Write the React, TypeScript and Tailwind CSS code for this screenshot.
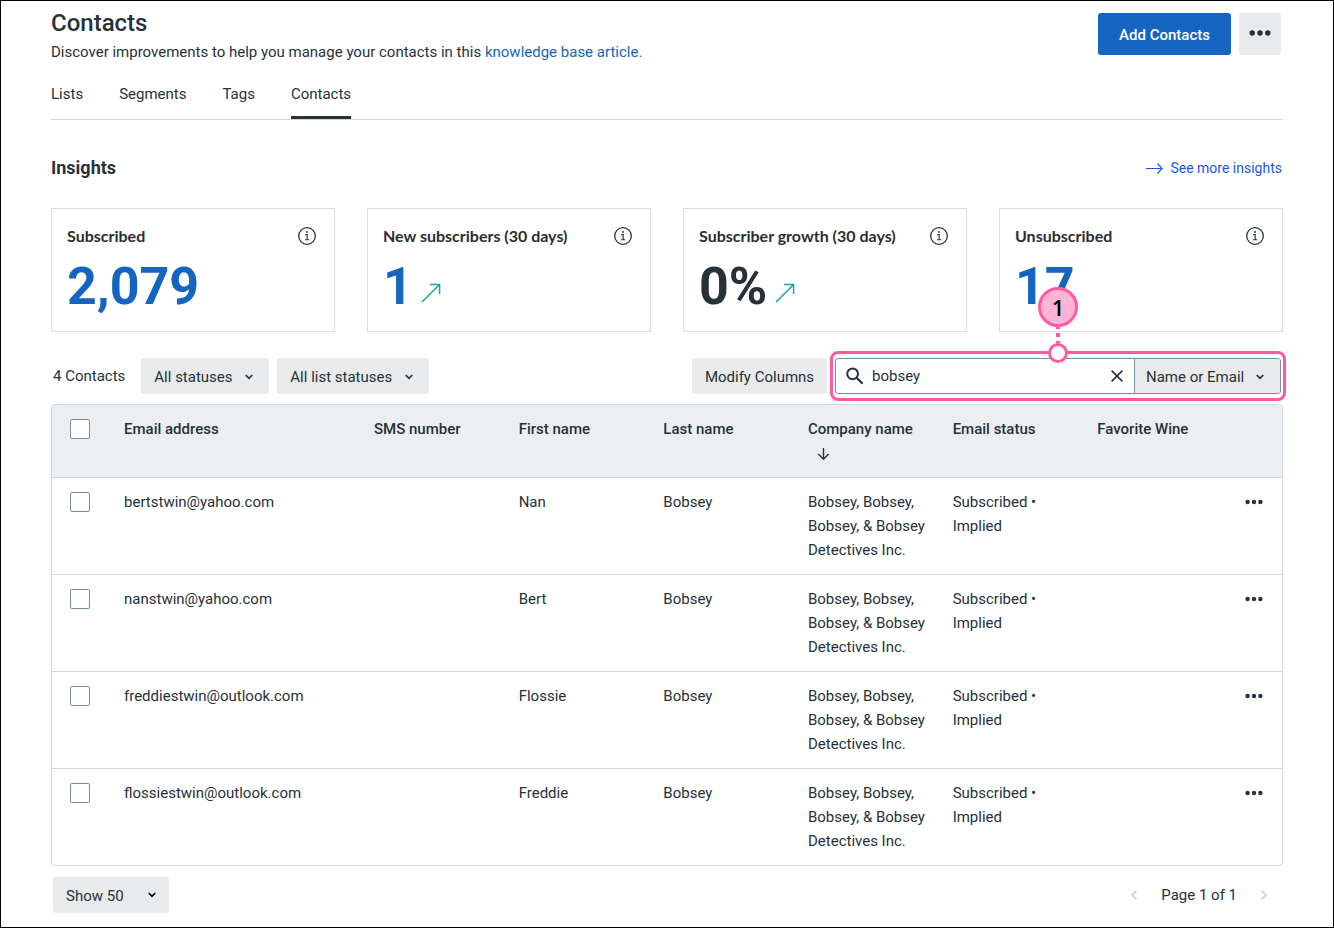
import { useState } from 'react';

type Contact = { email: string; first: string; last: string };
type Insight = { title: string; value: string; tone: string; trend?: boolean };

const tabs = ['Lists', 'Segments', 'Tags', 'Contacts'];

const insights: Insight[] = [
  { title: 'Subscribed', value: '2,079', tone: 'text-[#1565c0]' },
  { title: 'New subscribers (30 days)', value: '1', tone: 'text-[#1565c0]', trend: true },
  { title: 'Subscriber growth (30 days)', value: '0%', tone: 'text-[#263238]', trend: true },
  { title: 'Unsubscribed', value: '17', tone: 'text-[#1565c0]' },
];

const contacts: Contact[] = [
  { email: 'bertstwin@yahoo.com', first: 'Nan', last: 'Bobsey' },
  { email: 'nanstwin@yahoo.com', first: 'Bert', last: 'Bobsey' },
  { email: 'freddiestwin@outlook.com', first: 'Flossie', last: 'Bobsey' },
  { email: 'flossiestwin@outlook.com', first: 'Freddie', last: 'Bobsey' },
];

function Dots({ className }: { className: string }) {
  return (
    <svg viewBox="0 0 22 6" className={className} fill="currentColor" aria-hidden="true">
      <circle cx="3.2" cy="3" r="2.7" />
      <circle cx="11" cy="3" r="2.7" />
      <circle cx="18.8" cy="3" r="2.7" />
    </svg>
  );
}

function InfoIcon() {
  return (
    <svg viewBox="0 0 18 18" className="size-[18px]" fill="none" stroke="#263238" aria-hidden="true">
      <circle cx="9" cy="9" r="8.3" strokeWidth="1.3" />
      <path d="M7.2 7.6h2v5M7 12.8h4.2" strokeWidth="1.1" />
      <circle cx="9" cy="5" r="0.9" fill="#263238" stroke="none" />
    </svg>
  );
}

function TrendIcon() {
  return (
    <svg viewBox="0 0 20 20" className="size-5" fill="none" stroke="#12a89d" strokeWidth="1.5" aria-hidden="true">
      <path d="M1 19 18.4 1.8M9 1.6h9.6V11" />
    </svg>
  );
}

function Chevron({ className }: { className: string }) {
  return (
    <svg viewBox="0 0 8 6" className={className} fill="none" stroke="currentColor" strokeWidth="1.7" aria-hidden="true">
      <path d="M.7 1 4 4.3 7.3 1" />
    </svg>
  );
}

function PickList({ label, value, width, chevron }: { label: string; value: string; width: string; chevron: string }) {
  return (
    <div className={`relative ${width}`}>
      <select
        aria-label={label}
        className="h-9 w-full cursor-pointer appearance-none rounded-[3px] bg-[#e8eaeb] pt-0.5 pr-8 pl-[13px]"
      >
        <option>{value}</option>
      </select>
      <Chevron className={`pointer-events-none absolute h-1.5 w-2 ${chevron}`} />
    </div>
  );
}

function Checkbox({ label }: { label: string }) {
  return (
    <input
      type="checkbox"
      aria-label={label}
      className="mt-0.5 ml-1.5 block size-5 appearance-none rounded-[2px] border border-[#78909c] bg-white checked:bg-[#1565c0]"
    />
  );
}

function SearchBox() {
  const [query, setQuery] = useState('bobsey');
  return (
    <div className="relative w-[446px]">
      <div className="flex h-9 overflow-hidden rounded-[3px] border border-[#78909c]">
        <label className="flex min-w-0 flex-1 items-center gap-2 pl-2.5">
          <svg viewBox="0 0 18 18" className="size-[18px] shrink-0" fill="none" stroke="#263238" aria-hidden="true">
            <circle cx="6.6" cy="6.8" r="5.4" strokeWidth="2" />
            <path d="m10.6 10.8 6 6" strokeWidth="2.3" />
          </svg>
          <input
            type="text"
            aria-label="Search contacts"
            value={query}
            onChange={(e) => setQuery(e.target.value)}
            className="min-w-0 flex-1 bg-transparent leading-6 outline-none"
          />
        </label>
        <button type="button" aria-label="Clear search" onClick={() => setQuery('')} className="px-[11px]">
          <svg viewBox="0 0 12 12" className="size-3" fill="none" stroke="#263238" strokeWidth="1.6" aria-hidden="true">
            <path d="m.6.6 10.8 10.8M11.4.6.6 11.4" />
          </svg>
        </button>
        <div className="relative w-[146px] border-l border-[#78909c]">
          <select aria-label="Search field" className="h-full w-full appearance-none bg-[#e8eaeb] pt-0.5 pr-7 pl-[11px]">
            <option>Name or Email</option>
          </select>
          <Chevron className="pointer-events-none absolute top-[15px] right-4 h-1.5 w-2" />
        </div>
      </div>
      <div className="pointer-events-none absolute -inset-x-[5px] -inset-y-[7px] rounded-lg border-3 border-[#ff5ba3]" />
      <div className="pointer-events-none absolute -top-[71px] left-1/2 flex w-10 -translate-x-1/2 flex-col items-center">
        <span className="flex size-10 items-center justify-center rounded-full border-3 border-[#ff5ba3] bg-[#ffb3d5] font-['Open_Sans'] text-[22px] font-semibold text-black">
          1
        </span>
        <svg viewBox="0 0 4 16" className="h-4 w-1" stroke="#ff5ba3" strokeWidth="4" aria-hidden="true">
          <path d="M2 0v2M2 6v4M2 14v2" />
        </svg>
        <span className="size-5 rounded-full border-3 border-[#ff5ba3] bg-white" />
      </div>
    </div>
  );
}

export default function App() {
  return (
    <main className="min-h-screen border border-black bg-white px-[50px] pt-3 pb-3 font-[Roboto,sans-serif] text-[15px] text-[#263238]">
      <header className="flex items-start justify-between">
        <div>
          <h1 className="text-2xl leading-5 font-medium">Contacts</h1>
          <p className="mt-2 leading-[22px]">
            Discover improvements to help you manage your contacts in this{' '}
            <a href="#article" className="text-[#1565c0]">
              knowledge base article.
            </a>
          </p>
        </div>
        <div className="flex gap-2 pr-0.5">
          <button type="button" className="h-[42px] w-[133px] rounded-[3px] bg-[#1565c0] pt-0.5 font-medium text-white">
            Add Contacts
          </button>
          <button
            type="button"
            aria-label="More actions"
            className="flex size-[42px] items-center justify-center rounded-[3px] bg-[#e8eaeb] pb-0.5"
          >
            <Dots className="h-1.5 w-[22px]" />
          </button>
        </div>
      </header>

      <nav className="mt-[19px] flex gap-9 border-b border-[#cfd8dc]">
        {tabs.map((tab) => (
          <a
            key={tab}
            href={`#${tab.toLowerCase()}`}
            className={`border-b-3 pb-2.5 leading-6 ${tab === 'Contacts' ? 'border-[#263238]' : 'border-transparent'}`}
          >
            {tab}
          </a>
        ))}
      </nav>

      <section className="mt-9">
        <div className="flex items-center justify-between">
          <h2 className="text-lg leading-6 font-bold">Insights</h2>
          <a href="#insights" className="flex items-center gap-[7px] pr-px text-sm text-[#1d56e8]">
            <svg viewBox="0 0 17 12" className="h-3 w-[17px]" fill="none" stroke="currentColor" strokeWidth="1.2" aria-hidden="true">
              <path d="M0 6.5h16M11.5 1.5l4.7 5-4.7 5" />
            </svg>
            See more insights
          </a>
        </div>
        <div className="mt-7 grid grid-cols-4 gap-8">
          {insights.map((item) => (
            <article key={item.title} className="border border-[#dcdddf] pt-[15px] pr-[18px] pb-[15px] pl-[15px]">
              <div className="flex items-center justify-between">
                <h3 className="font-[Lato,sans-serif] text-base leading-6 font-bold text-[#2b2e30]">{item.title}</h3>
                <button type="button" aria-label={`About ${item.title}`}>
                  <InfoIcon />
                </button>
              </div>
              <p className={`mt-2.5 flex items-center gap-2 text-[52px] leading-[58px] font-bold ${item.tone}`}>
                {item.value}
                {item.trend && (
                  <span className="pt-3">
                    <TrendIcon />
                  </span>
                )}
              </p>
            </article>
          ))}
        </div>
      </section>

      <div className="mt-[26px] flex items-center gap-2 px-0.5">
        <span className="mr-2 leading-6">4 Contacts</span>
        <PickList label="Status" value="All statuses" width="w-32" chevron="top-4 right-4" />
        <PickList label="List status" value="All list statuses" width="w-[152px]" chevron="top-4 right-4" />
        <button type="button" className="ml-auto h-9 w-[135px] rounded-[3px] bg-[#e8eaeb] pt-0.5">
          Modify Columns
        </button>
        <SearchBox />
      </div>

      <div className="mt-2.5 overflow-hidden rounded border border-[#cfd8dc]">
        <table className="w-full table-fixed border-collapse text-left leading-6">
          <thead className="bg-[#eceff1]">
            <tr className="border-b border-[#cfd8dc] align-top [&>th]:p-3 [&>th]:font-medium">
              <th className="w-[60px]">
                <Checkbox label="Select all contacts" />
              </th>
              <th className="w-[250px]">Email address</th>
              <th>SMS number</th>
              <th>First name</th>
              <th>Last name</th>
              <th aria-sort="descending">
                Company name
                <svg viewBox="0 0 12 12" className="mt-[7px] mb-[5px] ml-2.5 size-3" fill="none" stroke="#263238" strokeWidth="1.4" aria-hidden="true">
                  <path d="M5.5 0v11M.3 6l5.200 5.200L10.700 6" />
                </svg>
              </th>
              <th>Email status</th>
              <th>Favorite Wine</th>
              <th className="w-[52px]" aria-label="Actions" />
            </tr>
          </thead>
          <tbody>
            {contacts.map((c) => (
              <tr key={c.email} className="border-b border-[#cfd8dc] align-top last:border-b-0 [&>td]:p-3">
                <td>
                  <Checkbox label={`Select ${c.email}`} />
                </td>
                <td>{c.email}</td>
                <td />
                <td>{c.first}</td>
                <td>{c.last}</td>
                <td>Bobsey, Bobsey, Bobsey, &amp; Bobsey Detectives Inc.</td>
                <td>Subscribed • Implied</td>
                <td />
                <td>
                  <button type="button" aria-label={`Actions for ${c.email}`} className="ml-[3px] flex h-6 items-center">
                    <Dots className="h-1.5 w-[18px]" />
                  </button>
                </td>
              </tr>
            ))}
          </tbody>
        </table>
      </div>

      <footer className="mt-[11px] flex items-center justify-between px-0.5">
        <PickList label="Rows per page" value="Show 50" width="w-[116px]" chevron="top-[15px] right-[13px] text-black" />
        <div className="flex items-center pr-[13px]">
          <button type="button" aria-label="Previous page" disabled className="text-[#cfd8dc]">
            <svg viewBox="0 0 8 10" className="h-2.5 w-2" fill="none" stroke="currentColor" strokeWidth="2.2" aria-hidden="true">
              <path d="M6.5.8 2 5l4.5 4.2" />
            </svg>
          </button>
          <span className="px-[23px]">Page 1 of 1</span>
          <button type="button" aria-label="Next page" disabled className="text-[#cfd8dc]">
            <svg viewBox="0 0 8 10" className="h-2.5 w-2" fill="none" stroke="currentColor" strokeWidth="2.2" aria-hidden="true">
              <path d="M1.5.8 6 5 1.5 9.2" />
            </svg>
          </button>
        </div>
      </footer>
    </main>
  );
}
